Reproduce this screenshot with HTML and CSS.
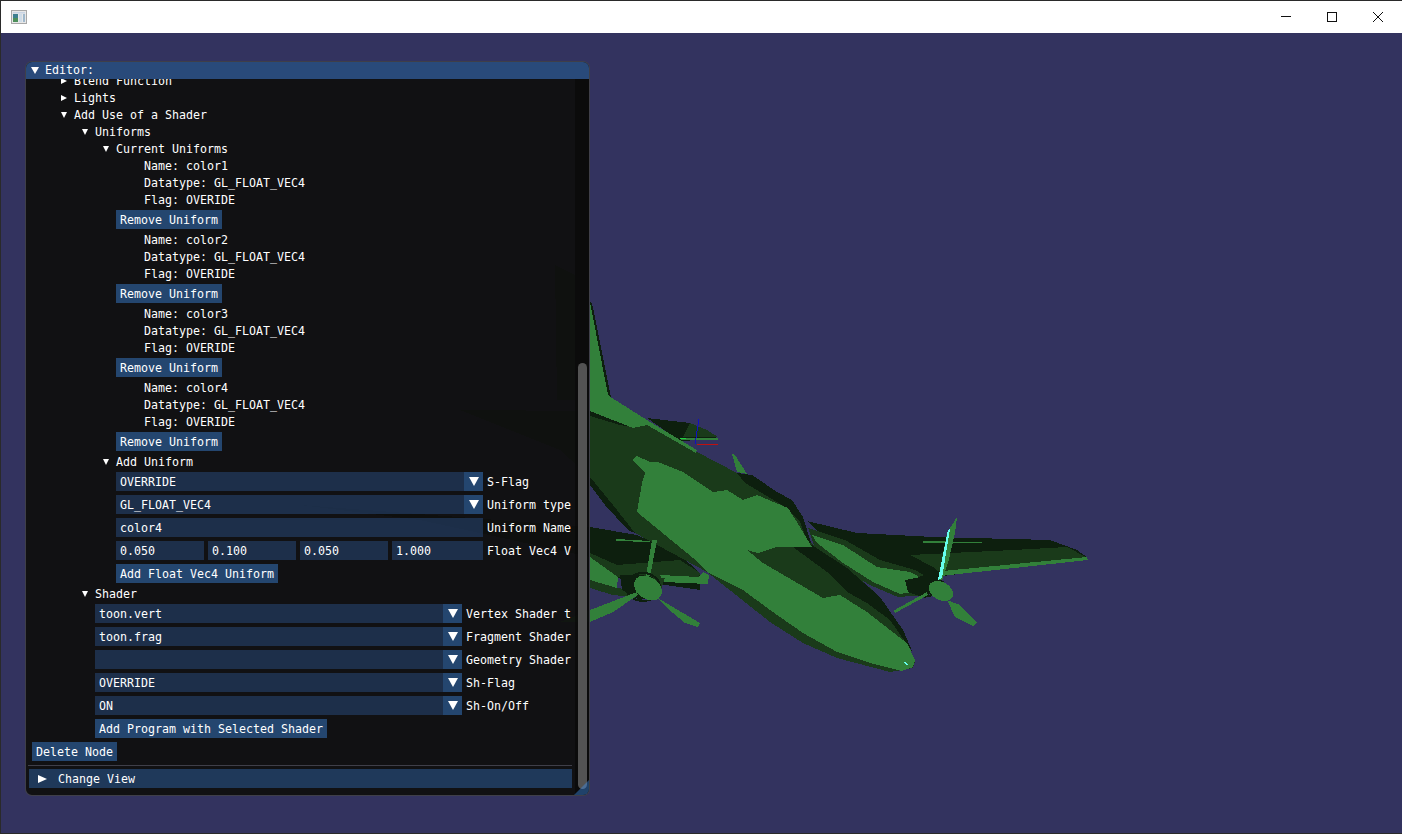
FILE: index.html
```html
<!DOCTYPE html>
<html lang="en">
<head>
<meta charset="utf-8">
<title>Editor</title>
<link rel="stylesheet" href="styles.css">
</head>
<body>
<header class="os-bar">
  <svg class="app-icon" width="16" height="14" viewBox="0 0 16 14"><rect x="0.5" y="0.5" width="15" height="13" fill="#e8e8e8" stroke="#a8a8a8"/><rect x="2" y="2" width="12" height="1.5" fill="#c8d4e4"/><rect x="2" y="4" width="5" height="8" fill="#3d7f8f"/><rect x="2" y="8" width="5" height="4" fill="#4d8f5a"/><rect x="8" y="4" width="3" height="8" fill="#cfdce8"/><rect x="12" y="4" width="2" height="8" fill="#9fb8cc"/></svg>
  <div class="os-controls">
    <svg class="os-btn" width="12" height="12" viewBox="0 0 12 12"><path d="M1 5.5H11" stroke="#111" fill="none"/></svg>
    <svg class="os-btn" width="12" height="12" viewBox="0 0 12 12"><rect x="1.5" y="1.5" width="9" height="9" stroke="#111" fill="none"/></svg>
    <svg class="os-btn" width="12" height="12" viewBox="0 0 12 12"><path d="M1 1L11 11M11 1L1 11" stroke="#111" fill="none"/></svg>
  </div>
</header>

<main class="viewport">
<svg class="scene" width="1402" height="834" viewBox="0 0 1402 834" shape-rendering="crispEdges">
  <g class="vd">
    <polygon points="807,521 857,533 933,537 1050,540 1077,550 1088,558 943,576 925,590 860,570"/>
    <polygon points="647,418 690,423 707,430 718,439 680,441"/>
    <polygon points="590,527 637,535 680,555 700,573 700,590 617,578 590,557 420,520 300,505"/>
  </g>
  <g class="d">
    <polygon points="910,555 1013,550 1067,547 1088,558 942,574 933,567"/>
    <polygon points="690,423 707,430 718,437 683,437"/>
    <polygon points="590,553 617,565 680,560 700,573 698,580 640,578 617,577 590,565"/>
    <polygon points="808,528 845,540 880,560 915,570 932,580 925,595 898,597 870,585 840,567 815,548"/>
    <polygon points="590,580 617,588 633,590 633,597 613,595 590,588"/>
  </g>
  <g class="g">
    <polygon points="943,571 1087,557 1088,560 940,576"/>
    <polygon points="923,541 982,542 982,543 923,543"/>
    <polygon points="812,535 843,545 877,567 910,572 925,580 913,582 912,592 900,594 873,582 843,563 817,543"/>
    <polygon points="590,557 618,577 617,588 590,580"/>
    <polygon points="660,575 698,577 703,572 709,575 708,584 664,582"/>
    <polygon points="682,438 718,438 718,440 680,440"/>
    <polygon points="732,454 735,455 747,474 737,472"/>
    <polygon points="616,539 650,541 650,542 616,541"/>
  </g>
  <polygon class="d" points="460,410 590,411 633,428 647,423 697,452 737,473 752,475 777,492 792,500 803,517 811,543 847,567 880,597 903,630 915,662 913,668 890,672 837,658 803,643 770,622 717,580 707,572 635,533 613,505 590,477 560,450"/>
  <polygon class="d" points="555,265 575,275 575,400 557,400"/>
  <polygon class="vd" points="590,411 633,427 620,425 590,416"/>
  <polygon class="vd" points="590,477 613,505 635,533 628,530 605,505 590,485"/>
  <polygon class="vd" points="737,473 752,475 777,492 792,500 803,517 811,543 808,543 800,522 785,507 757,490 745,483"/>
  <polygon class="vd" points="793,547 812,545 847,568 880,597 903,630 913,653 890,620 867,603 847,592 827,572"/>
  <polygon class="g" points="590,302 608,395 612,398 647,420 697,450 696,453 647,425 633,428 590,411"/>
  <polygon class="vd" points="590,302 592,303 611,397 608,395"/>
  <polygon class="g" points="632,460 637,456 650,462 658,462 683,472 713,492 727,490 743,500 757,495 788,508 800,527 812,547 777,547 758,553 747,550 763,563 823,598 840,595 867,612 890,630 907,643 915,660 913,667 902,671 870,663 837,652 803,633 770,610 743,590 707,572 693,558 637,512 642,483 645,473"/>
  <polygon class="g" points="652,540 657,540 650,577 646,576"/>
  <polygon class="vd" points="620,575 640,575 663,578 660,595 640,600 622,590"/>
  <polygon class="d" points="640,580 655,577 665,578 660,592 645,595"/>
  <ellipse class="ring" cx="643" cy="587" rx="17" ry="14"/>
  <polygon class="g" points="637,592 590,610 590,622 613,612 638,595"/>
  <polygon class="g" points="590,610 560,622 590,622"/>
  <polygon class="g" points="658,598 683,613 700,623 698,627 685,623 667,608"/>
  <ellipse class="g" cx="648" cy="588" rx="15" ry="11" transform="rotate(35 648 588)"/>
  <polygon class="vd" points="905,580 930,575 945,582 925,598 908,592"/>
  <ellipse class="ring" cx="927" cy="586" rx="13" ry="10"/>
  <polygon class="g" points="938,580 947,533 957,517 955,533 948,563 942,580"/>
  <polygon class="cy" points="938,580 948,530 950,529 942,578"/>
  <polygon class="g" points="928,595 895,613 893,611 927,592"/>
  <polygon class="g" points="947,600 960,605 977,623 973,626 955,617"/>
  <ellipse class="g" cx="941" cy="591" rx="13" ry="9" transform="rotate(28 941 591)"/>
  <path class="ax-b" d="M695 444L699 419"/>
  <path class="ax-r" d="M697 444H718"/>
  <path class="ax-l" d="M680 438H686"/>
  <path class="ax-c" d="M904 662L908 665"/>
</svg>

<section class="window">
  <div class="title"><i class="tri-title"></i><span>Editor:</span></div>
  <div class="body">
    <div class="scroll">
      <div class="content">
        <div class="row tree lv1"><i class="tri-r"></i>Blend Function</div>
        <div class="row tree lv1"><i class="tri-r"></i>Lights</div>
        <div class="row tree lv1"><i class="tri-d"></i>Add Use of a Shader</div>
        <div class="row tree lv2"><i class="tri-d"></i>Uniforms</div>
        <div class="row tree lv3"><i class="tri-d"></i>Current Uniforms</div>

        <div class="row info">Name: color1</div>
        <div class="row info">Datatype: GL_FLOAT_VEC4</div>
        <div class="row info">Flag: OVERIDE</div>
        <button class="btn lv-w3">Remove Uniform</button>

        <div class="row info">Name: color2</div>
        <div class="row info">Datatype: GL_FLOAT_VEC4</div>
        <div class="row info">Flag: OVERIDE</div>
        <button class="btn lv-w3">Remove Uniform</button>

        <div class="row info">Name: color3</div>
        <div class="row info">Datatype: GL_FLOAT_VEC4</div>
        <div class="row info">Flag: OVERIDE</div>
        <button class="btn lv-w3">Remove Uniform</button>

        <div class="row info">Name: color4</div>
        <div class="row info">Datatype: GL_FLOAT_VEC4</div>
        <div class="row info">Flag: OVERIDE</div>
        <button class="btn lv-w3">Remove Uniform</button>

        <div class="row tree lv3"><i class="tri-d"></i>Add Uniform</div>
        <div class="field-row lv-w3"><div class="combo"><span class="combo-value">OVERRIDE</span><span class="combo-arrow"><i class="tri-c"></i></span></div><span class="label">S-Flag</span></div>
        <div class="field-row lv-w3"><div class="combo"><span class="combo-value">GL_FLOAT_VEC4</span><span class="combo-arrow"><i class="tri-c"></i></span></div><span class="label">Uniform type</span></div>
        <div class="field-row lv-w3"><div class="combo"><span class="combo-value">color4</span></div><span class="label">Uniform Name</span></div>
        <div class="field-row lv-w3">
          <div class="vec">
            <span class="num">0.050</span><span class="num">0.100</span><span class="num">0.050</span><span class="num num-last">1.000</span>
          </div>
          <span class="label">Float Vec4 V</span>
        </div>
        <button class="btn lv-w3">Add Float Vec4 Uniform</button>

        <div class="row tree lv2"><i class="tri-d"></i>Shader</div>
        <div class="field-row lv-w2"><div class="combo"><span class="combo-value">toon.vert</span><span class="combo-arrow"><i class="tri-c"></i></span></div><span class="label">Vertex Shader t</span></div>
        <div class="field-row lv-w2"><div class="combo"><span class="combo-value">toon.frag</span><span class="combo-arrow"><i class="tri-c"></i></span></div><span class="label">Fragment Shader</span></div>
        <div class="field-row lv-w2"><div class="combo"><span class="combo-value"></span><span class="combo-arrow"><i class="tri-c"></i></span></div><span class="label">Geometry Shader</span></div>
        <div class="field-row lv-w2"><div class="combo"><span class="combo-value">OVERRIDE</span><span class="combo-arrow"><i class="tri-c"></i></span></div><span class="label">Sh-Flag</span></div>
        <div class="field-row lv-w2"><div class="combo"><span class="combo-value">ON</span><span class="combo-arrow"><i class="tri-c"></i></span></div><span class="label">Sh-On/Off</span></div>
        <button class="btn lv-w2">Add Program with Selected Shader</button>
        <button class="btn">Delete Node</button>
        <hr class="sep">
        <div class="header"><i class="tri-h"></i>Change View</div>
      </div>
    </div>
    <div class="track"><div class="grab"></div></div>
  </div>
  <i class="grip"></i>
</section>
</main>
</body>
</html>
```

FILE: styles.css
```css
* { box-sizing: border-box; }
html, body { margin: 0; padding: 0; }
body {
  width: 1402px;
  height: 834px;
  overflow: hidden;
  display: flex;
  flex-direction: column;
  background: #33335f;
  border-left: 1px solid #2a2a2a;
  border-top: 1px solid #2a2a2a;
  border-bottom: 1px solid #2a2a2a;
  font: 11.63px/13px "DejaVu Sans Mono", monospace;
  color: #fff;
}
.os-bar {
  height: 32px;
  flex: none;
  background: #fff;
  display: flex;
  align-items: center;
  padding-left: 10px;
  color: #111;
}
.os-controls {
  margin-left: auto;
  display: flex;
  gap: 34px;
  padding-right: 18px;
}
.os-btn { display: block; }
.viewport { flex: 1; position: relative; }
.scene { position: absolute; left: -1px; top: -33px; }
.g { fill: #32803a; }
.d { fill: #1a3a1a; }
.vd { fill: #0d1f0e; }
.cy { fill: #66ffee; }
.ring { fill: none; stroke: #0d1f0e; stroke-width: 2; }
.ax-b { stroke: #1010c0; fill: none; }
.ax-r { stroke: #c01010; fill: none; }
.ax-l { stroke: #20d040; fill: none; }
.ax-c { stroke: #66ffee; fill: none; }

.window {
  position: absolute;
  left: 24px;
  top: 28px;
  width: 565px;
  height: 735px;
  display: flex;
  flex-direction: column;
  border: 1px solid rgba(110, 110, 128, 0.5);
  border-radius: 7px;
  background: rgba(15, 15, 15, 0.94);
  overflow: hidden;
}
.title {
  height: 17px;
  flex: none;
  background: #294a7a;
  display: flex;
  align-items: center;
  padding-left: 5px;
  gap: 6px;
}
.tri-title {
  width: 0; height: 0;
  border-left: 4.5px solid transparent;
  border-right: 4.5px solid transparent;
  border-top: 7px solid #fff;
}
.body { flex: 1; display: flex; min-height: 0; }
.scroll {
  flex: none;
  width: 546px;
  margin-right: 3px;
  overflow: hidden;
  padding-left: 6px;
}
.content {
  display: flex;
  flex-direction: column;
  gap: 4px;
  margin-top: -5px;
  align-items: flex-start;
  white-space: pre;
}
.row { height: 13px; display: flex; align-items: center; padding-top: 2px; }
.tree i { margin: -2px 7px 0 0; }
.lv1 { margin-left: 29px; }
.lv2 { margin-left: 50px; }
.lv3 { margin-left: 71px; }
.info { margin-left: 112px; }
.lv-w3 { margin-left: 84px; }
.lv-w2 { margin-left: 63px; }
.tri-r {
  width: 0; height: 0;
  border-top: 3px solid transparent;
  border-bottom: 3px solid transparent;
  border-left: 6px solid #fff;
}
.tri-d {
  width: 0; height: 0;
  border-left: 3px solid transparent;
  border-right: 3px solid transparent;
  border-top: 6px solid #fff;
}
.btn {
  appearance: none;
  border: 0;
  height: 19px;
  padding: 2px 4px 0;
  background: rgba(66, 150, 250, 0.4);
  color: #fff;
  font: inherit;
  line-height: 13px;
  white-space: pre;
}
.field-row { display: flex; gap: 4px; height: 19px; align-items: center; }
.label { padding-top: 2px; }
.combo {
  width: 367px;
  height: 19px;
  display: flex;
}
.combo-value {
  flex: 1;
  padding: 4px 0 0 4px;
  background: rgba(41, 74, 122, 0.54);
}
.combo-arrow {
  width: 19px;
  display: flex;
  align-items: center;
  justify-content: center;
  background: rgba(66, 150, 250, 0.4);
}
.tri-c {
  width: 0; height: 0;
  border-left: 5px solid transparent;
  border-right: 5px solid transparent;
  border-top: 9px solid #fff;
}
.vec { width: 367px; display: flex; gap: 4px; }
.num {
  width: 88px;
  height: 19px;
  padding: 4px 0 0 4px;
  background: rgba(41, 74, 122, 0.54);
}
.num-last { width: 91px; }
.sep {
  align-self: stretch;
  margin: 0 0 -1px -4px;
  height: 1px;
  border: 0;
  background: rgba(110, 110, 128, 0.5);
}
.header {
  align-self: stretch;
  margin-left: -3px;
  height: 19px;
  display: flex;
  align-items: center;
  padding: 2px 0 0 9px;
  background: rgba(66, 150, 250, 0.31);
}
.tri-h {
  width: 0; height: 0;
  border-top: 4.5px solid transparent;
  border-bottom: 4.5px solid transparent;
  border-left: 9px solid #fff;
  margin: -2px 11px 0 0;
}
.track {
  flex: none;
  width: 14px;
  background: rgba(5, 5, 5, 0.53);
  display: flex;
  flex-direction: column;
  justify-content: flex-end;
  padding: 0 2px 6px 3px;
}
.grab {
  width: 9px;
  height: 426px;
  border-radius: 5px;
  background: #535353;
}
.grip {
  position: absolute;
  right: 0;
  bottom: 0;
  width: 0; height: 0;
  border-left: 15px solid transparent;
  border-bottom: 15px solid rgba(66, 150, 250, 0.4);
}
```
